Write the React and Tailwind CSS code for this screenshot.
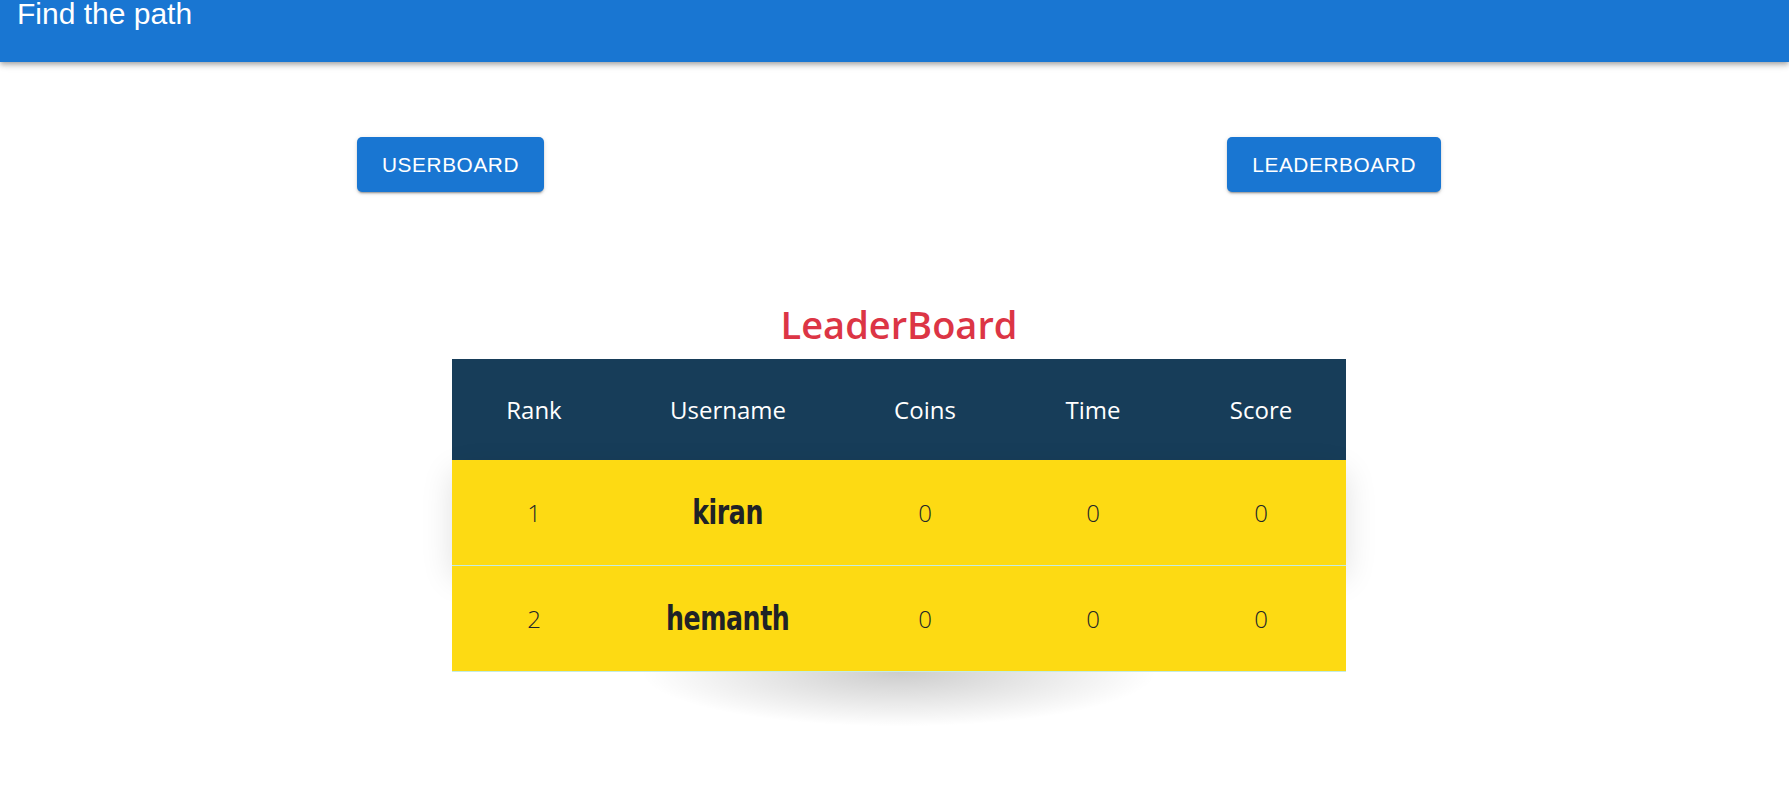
import React from "react";

const players = [
  { rank: 1, username: "kiran", coins: 0, time: 0, score: 0 },
  { rank: 2, username: "hemanth", coins: 0, time: 0, score: 0 },
];

const cols = "grid grid-cols-[164px_224px_170px_166px_170px]";

const App = () => {
  return (
    <div className="min-h-screen bg-white font-['Liberation_Sans',Arial,sans-serif]">
      <header className="h-[62px] bg-[#1976d2] text-white shadow-[0_2px_4px_-1px_rgba(0,0,0,0.2),0_4px_5px_0_rgba(0,0,0,0.14),0_1px_10px_0_rgba(0,0,0,0.12)]">
        <h1 className="pl-[17px] text-[30px] leading-[27px]">Find the path</h1>
      </header>

      <div className="mt-[75px] ml-[357px] w-[1084px] flex justify-between">
        <button className="h-[55px] px-[25px] rounded-[5px] bg-[#1976d2] text-white text-[20.8px] tracking-[0.02857em] uppercase shadow-[0_3px_1px_-2px_rgba(0,0,0,0.2),0_2px_2px_0_rgba(0,0,0,0.14),0_1px_5px_0_rgba(0,0,0,0.12)]">
          Userboard
        </button>
        <button className="h-[55px] px-[25px] rounded-[5px] bg-[#1976d2] text-white text-[20.8px] tracking-[0.02857em] uppercase shadow-[0_3px_1px_-2px_rgba(0,0,0,0.2),0_2px_2px_0_rgba(0,0,0,0.14),0_1px_5px_0_rgba(0,0,0,0.12)]">
          Leaderboard
        </button>
      </div>

      <div className="ml-[452px] w-[894px] mt-[108px] font-['Open_Sans','Noto_Sans',sans-serif]">
        <h2 className="text-center text-[38px] leading-[48px] font-semibold text-[#dc3545] mb-[11px]">
          LeaderBoard
        </h2>
        <div className="relative">
          <div className={`${cols} h-[101px] bg-[#173d59] text-white text-[24px] items-center text-center`}>
            <div>Rank</div>
            <div>Username</div>
            <div>Coins</div>
            <div>Time</div>
            <div>Score</div>
          </div>
          {players.map((p, i) => (
            <div
              key={p.rank}
              className={`${cols} h-[106px] items-center text-center bg-[#fdda13] text-[#212529] text-[24px] font-light border-b border-[#c4ece2] ${
                i === 0 ? "shadow-[0_12px_30px_rgba(0,0,0,0.12)]" : ""
              }`}
            >
              <div>{p.rank}</div>
              <div>
                <span className="inline-block scale-x-[0.85] font-['Impact','DejaVu_Sans',sans-serif] font-stretch-condensed font-bold text-[33px] tracking-[-0.5px] text-[#1f2227]">
                  {p.username}
                </span>
              </div>
              <div>{p.coins}</div>
              <div>{p.time}</div>
              <div>{p.score}</div>
            </div>
          ))}
          <div className="absolute left-1/2 -translate-x-1/2 top-full w-[520px] h-[55px] bg-[radial-gradient(ellipse_at_top,rgba(0,0,0,0.2),transparent_70%)]" />
        </div>
      </div>
    </div>
  );
};

export default App;
